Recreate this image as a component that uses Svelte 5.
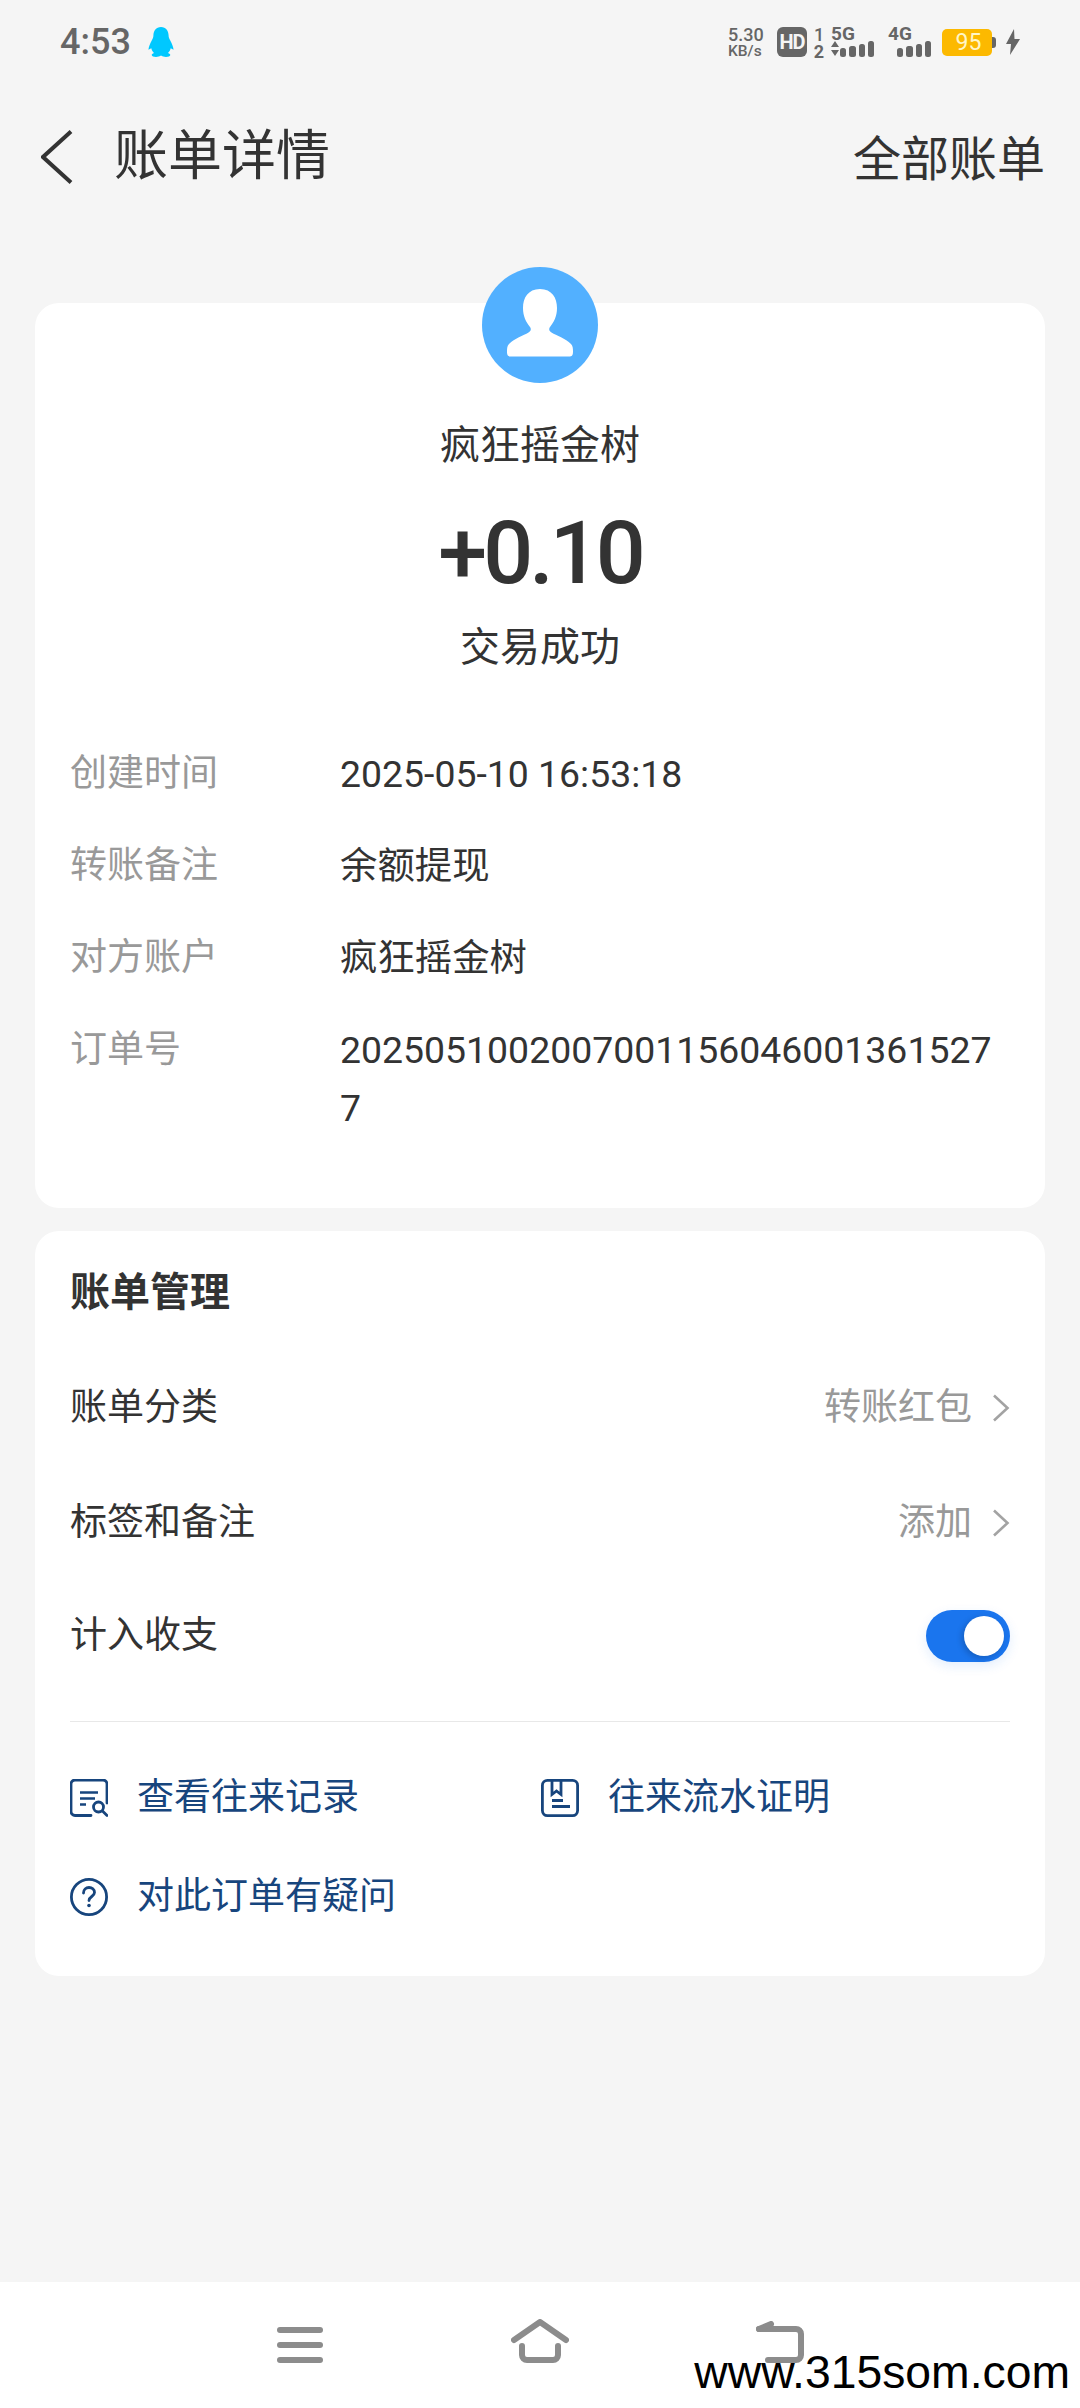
<script lang="ts">
	const details = [
		{ label: '创建时间', value: '2025-05-10 16:53:18' },
		{ label: '转账备注', value: '余额提现' },
		{ label: '对方账户', value: '疯狂摇金树' },
		{ label: '订单号', value: '20250510020070011560460013615277' }
	];
	const signal = [
		[0, 6, 9],
		[9, 7, 11],
		[19, 6, 13],
		[28, 6, 16]
	];
</script>

<div class="page">
	<header class="status">
		<div class="clock">
			<span class="time">4:53</span>
			<svg class="qq" width="26" height="30" viewBox="0 0 26 30">
				<path d="M13 0c5 0 7.500 4 7.600 8.500 0 2 .6 3 1.800 5.200 1.600 2.800 2.800 6 3.200 9l-2.900-1.400c-.5 2-1.500 3.500-2.700 4.700 1.500.5 2.300 1.200 2.300 2 0 1.200-2 2-4.300 2-2 0-3.700-.5-4.300-1.200h-1.400c-.6.700-2.300 1.200-4.300 1.200-2.300 0-4.300-.8-4.300-2 0-.8.800-1.500 2.300-2-1.200-1.200-2.200-2.700-2.700-4.700L.4 22.700c.4-3 1.600-6.200 3.200-9C4.800 11.500 5.400 10.500 5.400 8.500 5.500 4 8 0 13 0z" fill="#00c8ff" />
			</svg>
		</div>
		<div class="indicators">
			<div class="speed"><span>5.30</span><span class="unit">KB/s</span></div>
			<div class="hd">HD</div>
			<div class="sims"><span class="one">1</span><span>2</span></div>
			<div class="net five">
				<span>5G</span>
				<svg width="44" height="16" viewBox="0 0 44 16">
					<path d="M0 6l4-6 4 6zM0 9h8l-4 6z" fill="#666" />
					{#each signal as [x, w, h]}
						<rect x={x + 9} y={16 - h} width={w} height={h} rx="2.500" fill="#666" />
					{/each}
				</svg>
			</div>
			<div class="net four">
				<span>4G</span>
				<svg width="44" height="16" viewBox="0 0 44 16">
					{#each signal as [x, w, h]}
						<rect x={x + 9} y={16 - h} width={w} height={h} rx="2.500" fill="#666" />
					{/each}
				</svg>
			</div>
			<div class="battery"><span class="level">95</span><i class="nub"></i></div>
			<svg class="bolt" width="14" height="26" viewBox="0 0 14 26">
				<path d="M8 0L0 15h5l-1 11 10-16H8.500z" fill="#666" />
			</svg>
		</div>
	</header>

	<nav class="topbar">
		<div class="title-wrap">
			<svg class="back" width="32" height="54" viewBox="0 0 32 54">
				<path d="M30 1.500L2 27l28 25.500" fill="none" stroke="#333" stroke-width="4" />
			</svg>
			<h1>账单详情</h1>
		</div>
		<span class="all">全部账单</span>
	</nav>

	<section class="card summary">
		<div class="avatar">
			<svg width="116" height="116" viewBox="0 0 116 116">
				<circle cx="58" cy="58" r="58" fill="#52b0ff" />
				<path d="M58 22c12 0 17 9 17 19 0 8-3 14-7 19-1.500 2-.8 4 1.500 5.500 5 3 14 6 19.500 11.500 1.800 2 2 4 2 7.500 0 4-1 5-4 5H29c-3 0-4-1-4-5 0-3.500.2-5.500 2-7.500 5.500-5.500 14.500-8.500 19.500-11.500 2.300-1.500 3-3.500 1.500-5.500-4-5-7-11-7-19 0-10 5-19 17-19z" fill="#fff" />
			</svg>
		</div>
		<p class="name">疯狂摇金树</p>
		<p class="amount">+0.10</p>
		<p class="result">交易成功</p>

		<dl class="details">
			{#each details as row}
				<div class="detail">
					<dt>{row.label}</dt>
					<dd>{row.value}</dd>
				</div>
			{/each}
		</dl>
	</section>

	<section class="card manage">
		<h2>账单管理</h2>
		<div class="row first">
			<span>账单分类</span>
			<span class="side">转账红包
				<svg width="18" height="28" viewBox="0 0 18 28"><path d="M2 1.500L15.500 14 2 26.500" fill="none" stroke="#a3a3a3" stroke-width="2.600" /></svg>
			</span>
		</div>
		<div class="row second">
			<span>标签和备注</span>
			<span class="side">添加
				<svg width="18" height="28" viewBox="0 0 18 28"><path d="M2 1.500L15.500 14 2 26.500" fill="none" stroke="#a3a3a3" stroke-width="2.600" /></svg>
			</span>
		</div>
		<div class="row third">
			<span>计入收支</span>
			<span class="toggle"><i class="knob"></i></span>
		</div>
		<hr />
		<div class="links">
			<div class="link">
				<svg width="38" height="38" viewBox="0 0 38 38" fill="none" stroke="#17457d" stroke-width="2.800">
					<path d="M21 36.500H5a4 4 0 0 1-4-4V5a4 4 0 0 1 4-4h28a4 4 0 0 1 4 4v19" stroke-linecap="round" />
					<path d="M10 13.500h18M10 19.500h15M10 25.500h6" stroke-width="2.600" />
					<circle cx="28.500" cy="28" r="5" />
					<path d="M32.500 32l4.500 4.500" stroke-linecap="round" />
				</svg>
				<span>查看往来记录</span>
			</div>
			<div class="link proof">
				<svg width="38" height="38" viewBox="0 0 38 38" fill="none" stroke="#17457d" stroke-width="2.800">
					<rect x="1.400" y="1.400" width="35.200" height="35.200" rx="5" />
					<path d="M11 1.500v14l4.500-3.500 4.500 3.500v-14" />
					<path d="M11 21.500h11M11 27.500h18" />
				</svg>
				<span>往来流水证明</span>
			</div>
			<div class="link">
				<svg width="38" height="38" viewBox="0 0 38 38" fill="none" stroke="#17457d" stroke-width="2.800">
					<circle cx="19" cy="19" r="17.600" />
					<path d="M13.500 15c0-3.500 2.500-5.500 5.500-5.500s5.500 2 5.500 5c0 4-5.500 4-5.500 8" stroke-linecap="round" />
					<circle cx="19" cy="27.500" r="1.800" fill="#17457d" stroke="none" />
				</svg>
				<span>对此订单有疑问</span>
			</div>
		</div>
	</section>

	<footer class="navbar">
		<svg class="menu" width="46" height="36" viewBox="0 0 46 36">
			<rect y="0" width="46" height="6" rx="3" fill="#8c8c8c" />
			<rect y="15" width="46" height="6" rx="3" fill="#8c8c8c" />
			<rect y="30" width="46" height="6" rx="3" fill="#8c8c8c" />
		</svg>
		<svg class="home" width="58" height="44" viewBox="0 0 58 44" fill="none" stroke="#8c8c8c" stroke-width="6" stroke-linecap="round" stroke-linejoin="round">
			<path d="M3 21L29 3l26 18" />
			<path d="M11 27v9a5 5 0 0 0 5 5h26a5 5 0 0 0 5-5v-9" />
		</svg>
		<svg class="return" width="48" height="42" viewBox="0 0 48 42" fill="none" stroke="#8c8c8c" stroke-width="6" stroke-linecap="round" stroke-linejoin="round">
			<path d="M3 8h37a5 5 0 0 1 5 5v21a5 5 0 0 1-5 5H12" />
			<path d="M3 8l12-5" />
		</svg>
		<span class="watermark">www.315som.com</span>
	</footer>
</div>

<style>
	:global(body) {
		margin: 0;
		background: #f5f5f5;
	}

	.page {
		position: relative;
		width: 1080px;
		height: 2408px;
		display: flex;
		flex-direction: column;
		background: #f5f5f5;
		color: #333;
		font-family: Roboto, 'Noto Sans CJK SC', sans-serif;
		overflow: hidden;
	}

	.status {
		height: 84px;
		padding: 26px 60px 0 60px;
		box-sizing: border-box;
		display: flex;
		justify-content: space-between;
		align-items: flex-start;
		color: #666;
	}

	.clock {
		display: flex;
		align-items: center;
		gap: 17px;
	}

	.time {
		font-size: 36px;
		font-weight: 500;
		line-height: 32px;
	}

	.indicators {
		display: flex;
		align-items: flex-start;
		font-weight: 700;
	}

	.speed {
		width: 49px;
		margin-top: 1px;
		display: flex;
		flex-direction: column;
		font-size: 18px;
		line-height: 16px;
		font-weight: 500;
	}

	.speed .unit {
		font-size: 15.5px;
	}

	.hd {
		width: 30px;
		height: 30px;
		margin-top: 1px;
		border-radius: 6px;
		background: #666;
		color: #f5f5f5;
		font-size: 20px;
		letter-spacing: -1px;
		line-height: 30px;
		text-align: center;
	}

	.sims {
		width: 24px;
		box-sizing: border-box;
		display: flex;
		flex-direction: column;
		align-items: center;
		font-size: 18px;
		line-height: 17px;
	}

	.one {
		font-weight: 500;
	}

	.net {
		display: flex;
		flex-direction: column;
		font-size: 19px;
		line-height: 15px;
	}

	.net svg {
		display: block;
	}

	.five {
		width: 57px;
	}

	.four {
		width: 54px;
	}

	.battery {
		position: relative;
		width: 50px;
		height: 27px;
		margin-top: 3px;
		padding-left: 3px;
		box-sizing: border-box;
		border-radius: 5px;
		background: #fcb900;
		color: #fff6c8;
		font-size: 23px;
		font-weight: 400;
		line-height: 27px;
		text-align: center;
	}

	.nub {
		position: absolute;
		top: 8px;
		right: -4px;
		width: 4px;
		height: 11px;
		border-radius: 0 3px 3px 0;
		background: #666;
	}

	.bolt {
		margin: 3px 0 0 14px;
	}

	.topbar {
		height: 76px;
		margin-top: 38px;
		padding: 0 35px 0 41px;
		display: flex;
		justify-content: space-between;
		align-items: center;
	}

	.title-wrap {
		display: flex;
		align-items: center;
		gap: 41px;
		padding-bottom: 6px;
	}

	.back {
		display: block;
	}

	h1 {
		margin: 0;
		font-size: 54px;
		font-weight: 400;
		line-height: 70px;
	}

	.all {
		font-size: 48px;
		line-height: 76px;
	}

	.card {
		margin: 0 35px;
		background: #fff;
		border-radius: 24px;
	}

	.summary {
		position: relative;
		height: 905px;
		margin-top: 105px;
		display: flex;
		flex-direction: column;
		align-items: center;
	}

	.avatar {
		position: absolute;
		top: -36px;
		left: 447px;
	}

	.avatar svg {
		display: block;
	}

	.name {
		margin: 114px 0 0;
		font-size: 40px;
		line-height: 58px;
	}

	.amount {
		margin: 28px 0 0;
		font-size: 88px;
		font-weight: 500;
		letter-spacing: -4px;
		line-height: 100px;
	}

	.result {
		margin: 16px 0 0;
		font-size: 40px;
		line-height: 58px;
	}

	.details {
		align-self: stretch;
		margin: 68px 0 0;
		padding: 0 35px;
		font-size: 37px;
		line-height: 58px;
	}

	.detail {
		display: flex;
		margin-bottom: 34px;
	}

	dt {
		width: 270px;
		flex-shrink: 0;
		color: #999;
	}

	dd {
		width: 660px;
		margin: 0;
		font-size: 37.400px;
		word-break: break-all;
	}

	.manage {
		height: 745px;
		margin-top: 23px;
		padding: 0 35px;
		box-sizing: border-box;
		font-size: 37px;
		line-height: 58px;
	}

	h2 {
		margin: 0;
		padding-top: 33px;
		font-size: 40px;
		font-weight: 700;
		line-height: 58px;
	}

	.row {
		display: flex;
		justify-content: space-between;
		align-items: center;
		height: 58px;
	}

	.first {
		margin-top: 57px;
	}

	.second {
		margin-top: 57px;
	}

	.third {
		margin-top: 55px;
	}

	.side {
		display: flex;
		align-items: center;
		gap: 20px;
		color: #999;
	}

	.side svg {
		display: block;
	}

	.toggle {
		position: relative;
		width: 84px;
		height: 52px;
		border-radius: 26px;
		background: #1a75ee;
		box-shadow: 0 4px 12px rgba(26, 117, 238, 0.12);
	}

	.knob {
		position: absolute;
		top: 6px;
		right: 6px;
		width: 40px;
		height: 40px;
		border-radius: 50%;
		background: #fff;
		box-shadow: -2px 2px 6px rgba(0, 0, 0, 0.2);
	}

	hr {
		height: 1px;
		margin: 56px 0 0;
		border: 0;
		background: #e8e8e8;
	}

	.links {
		display: flex;
		flex-wrap: wrap;
		row-gap: 41px;
		margin-top: 47px;
		color: #17457d;
	}

	.link {
		display: flex;
		align-items: center;
		gap: 29px;
		width: 471px;
		height: 58px;
	}

	.link.proof {
		width: 440px;
	}

	.navbar {
		position: absolute;
		left: 0;
		right: 0;
		bottom: 0;
		height: 126px;
		background: #fff;
	}

	.navbar svg {
		position: absolute;
	}

	.menu {
		left: 277px;
		top: 45px;
	}

	.home {
		left: 511px;
		top: 37px;
	}

	.return {
		left: 756px;
		top: 39px;
	}

	.watermark {
		position: absolute;
		right: 10px;
		top: 61px;
		color: #000;
		font-family: 'Liberation Sans', sans-serif;
		font-size: 46.3px;
		line-height: 58px;
	}
</style>
